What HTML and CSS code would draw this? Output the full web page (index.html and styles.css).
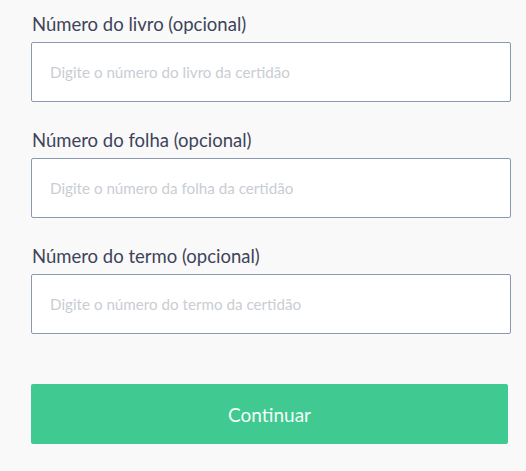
FILE: index.html
```html
<!DOCTYPE html>
<html lang="pt">
<head>
<meta charset="utf-8">
<link rel="stylesheet" href="styles.css">
</head>
<body>
<form class="form">
  <div class="field">
    <label class="label">Número do livro (opcional)</label>
    <input class="input" type="text" placeholder="Digite o número do livro da certidão">
  </div>
  <div class="field">
    <label class="label">Número do folha (opcional)</label>
    <input class="input" type="text" placeholder="Digite o número da folha da certidão">
  </div>
  <div class="field">
    <label class="label">Número do termo (opcional)</label>
    <input class="input" type="text" placeholder="Digite o número do termo da certidão">
  </div>
  <button class="button" type="button">Continuar</button>
</form>
</body>
</html>
```

FILE: styles.css
```css
html, body {
  margin: 0;
  padding: 0;
  background: #f9f9f9;
}
body {
  font-family: Lato, "Open Sans", sans-serif;
}
.form {
  padding: 13px 15px 0 31px;
  display: flex;
  flex-direction: column;
}
.field {
  display: flex;
  flex-direction: column;
  gap: 7px;
  margin-bottom: 27px;
}
.label {
  font-size: 18.5px;
  line-height: 22px;
  color: #3d4459;
  padding-left: 1px;
}
.input {
  box-sizing: border-box;
  width: 480px;
  height: 60px;
  margin: 0;
  border: 1px solid #8a98b3;
  border-radius: 2px;
  background: #fff;
  padding: 0 18px;
  font-family: Lato, "Open Sans", sans-serif;
  font-size: 15.2px;
  color: #3d4459;
  outline: none;
}
.input::placeholder {
  color: #c9cdd3;
}
.button {
  margin-top: 23px;
  width: 477px;
  height: 60px;
  border: 0;
  border-radius: 2px;
  background: #40c990;
  color: #f4fff9;
  font-family: Lato, "Open Sans", sans-serif;
  font-size: 19px;
  cursor: pointer;
}
```
